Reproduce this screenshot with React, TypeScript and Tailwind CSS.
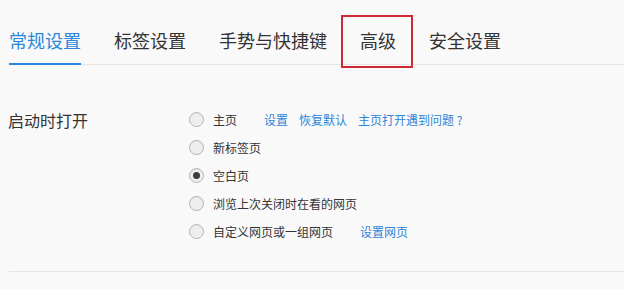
import React from "react";

const font = { fontFamily: '"Noto Sans CJK SC", "Microsoft YaHei", sans-serif' };

function Radio({ checked }: { checked?: boolean }) {
  return (
    <span className="w-[15px] h-[15px] rounded-full border border-[#b5b5b5] bg-[#eeeeee] flex items-center justify-center shrink-0 shadow-[inset_0_1px_1px_rgba(0,0,0,0.05)]">
      {checked && <span className="w-[7px] h-[7px] rounded-full bg-[#3d3d3d]" />}
    </span>
  );
}

export default function App() {
  const tabs = ["常规设置", "标签设置", "手势与快捷键", "高级", "安全设置"];
  const options: { label: string; checked?: boolean; links?: string[]; gap?: string }[] = [
    { label: "主页", links: ["设置", "恢复默认", "主页打开遇到问题 ?"], gap: "ml-[27px]" },
    { label: "新标签页" },
    { label: "空白页", checked: true },
    { label: "浏览上次关闭时在看的网页" },
    { label: "自定义网页或一组网页", links: ["设置网页"], gap: "ml-[27px]" },
  ];
  return (
    <div className="w-[624px] h-[289px] bg-[#f9f9f9] relative overflow-hidden" style={font}>
      <div className="ml-[9px] flex gap-[33px] border-b border-[#e6e6e6] h-[65px] items-end">
        {tabs.map((t, i) => (
          <div
            key={t}
            className={
              "text-[18px] leading-[18px] " +
              (i === 0 ? "text-[#2b87da] border-b-2 border-[#2b87da] -mb-px pb-[14px]" : "text-[#333333] pb-[15px]")
            }
          >
            {t}
          </div>
        ))}
      </div>
      <div className="absolute left-[341px] top-[15px] w-[72px] h-[53px] border-2 border-[#cf2a31]" />
      <div className="ml-[8px] mt-[48px] flex">
        <div className="w-[181px] text-[16px] leading-[16px] text-[#333333] -mt-[1px]">启动时打开</div>
        <div className="flex flex-col gap-[13px] -mt-[1px]">
          {options.map((o) => (
            <div key={o.label} className="flex items-center h-[15px]">
              <Radio checked={o.checked} />
              <span className="ml-[9px] text-[12px] leading-[12px] text-[#333333]">{o.label}</span>
              {o.links && (
                <div className={"flex gap-[11px] " + o.gap}>
                  {o.links.map((l) => (
                    <span key={l} className="text-[12px] leading-[12px] text-[#2e86d7]">{l}</span>
                  ))}
                </div>
              )}
            </div>
          ))}
        </div>
      </div>
      <div className="absolute left-[9px] right-0 top-[271px] border-t border-[#e6e6e6]" />
    </div>
  );
}
